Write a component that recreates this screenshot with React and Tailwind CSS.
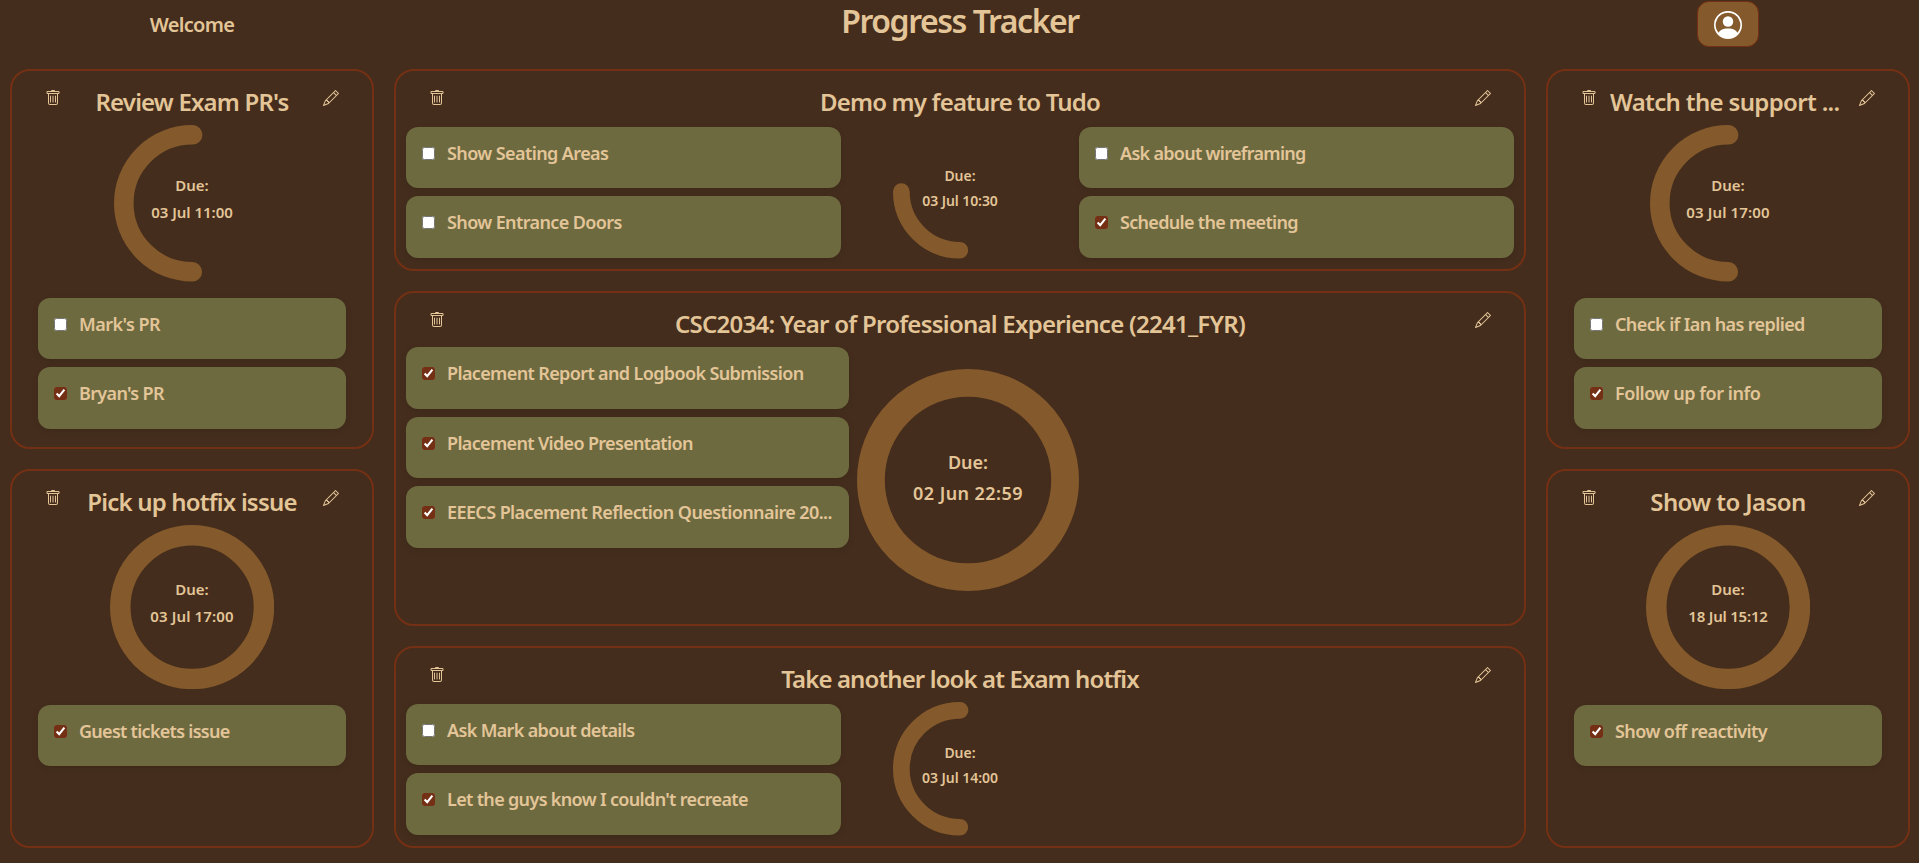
import React from "react";
import { BsPencil, BsPersonCircle, BsTrash } from "react-icons/bs";

function Ring({
  size,
  fraction = 1,
  dueDate,
  textClass,
  dateTracking = "tracking-[0.008em]",
  lift = "pb-2",
}) {
  const stroke = size / 8;
  const radius = (size - stroke) / 2;
  const center = size / 2;
  const length = 2 * Math.PI * radius;
  // A partial ring starts at the bottom and runs clockwise
  return (
    <div className="relative shrink-0" style={{ width: size, height: size }}>
      <svg width={size} height={size} className="block">
        <circle
          cx={center}
          cy={center}
          r={radius}
          fill="none"
          stroke="#84592B"
          strokeWidth={stroke}
          strokeLinecap={fraction < 1 ? "round" : "butt"}
          strokeDasharray={fraction < 1 ? `${length * fraction} ${length}` : undefined}
          transform={`rotate(90 ${center} ${center})`}
        />
      </svg>
      <div
        className={`absolute inset-0 flex flex-col items-center justify-center whitespace-nowrap ${lift}`}
      >
        <span className={textClass}>Due:</span>
        <span className={`${textClass} ${dateTracking}`}>{dueDate}</span>
      </div>
    </div>
  );
}

function Task({ label, done = false, tracking = "tracking-[-0.034em]" }) {
  return (
    <label className="flex h-[61.75px] shrink-0 items-start rounded-xl bg-[#6D6A40] pl-4 shadow-[0_2px_6px_rgba(0,0,0,0.1)]">
      <input
        type="checkbox"
        defaultChecked={done}
        className="mt-5 size-[13px] shrink-0 accent-[#743014]"
      />
      <span className={`ml-3 pt-[13px] text-[18px] leading-[27px] whitespace-nowrap ${tracking}`}>
        {label}
      </span>
    </label>
  );
}

function TaskList({ className = "", tasks }) {
  return (
    <div className={`flex flex-col gap-2 ${className}`}>
      {tasks.map((task) => (
        <Task key={task.label} {...task} />
      ))}
    </div>
  );
}

function Card({ title, titleClass = "text-center tracking-[-0.034em]", className = "", children }) {
  return (
    <section
      className={`flex min-h-0 flex-col rounded-[20px] border-2 border-[#743014] ${className}`}
    >
      <div className="flex h-[54px] shrink-0 items-start px-[33px]">
        <BsTrash size={16} className="mt-[19px] shrink-0" />
        <h2
          className={`mx-[13px] min-w-0 flex-1 pt-[13px] text-2xl leading-9 font-semibold whitespace-nowrap ${titleClass}`}
        >
          {title}
        </h2>
        <BsPencil size={16} className="mt-[19px] shrink-0" />
      </div>
      {children}
    </section>
  );
}

const sideDue = "text-[15px] leading-[27px]";
const midDue = "text-[14px] leading-[25px]";

function SideCard({ title, titleClass, ring, fraction, dueDate, dateTracking, tasks }) {
  return (
    <Card title={title} titleClass={titleClass} className="flex-1">
      <div className="flex flex-col items-center gap-4">
        <Ring
          size={ring}
          fraction={fraction}
          dueDate={dueDate}
          textClass={sideDue}
          dateTracking={dateTracking}
        />
        <TaskList className="w-[308px]" tasks={tasks} />
      </div>
    </Card>
  );
}

export default function App() {
  return (
    <div className="flex h-[863px] w-[1920px] flex-col bg-[#442D1C] px-[10px] pb-[15px] font-['Noto_Sans',sans-serif] font-semibold text-[#E3C598]">
      <header className="grid h-[69px] shrink-0 grid-cols-[364px_1132px_364px] items-start gap-5">
        <p className="pt-[10px] text-center text-xl leading-[30px] tracking-[-0.033em]">Welcome</p>
        <h1 className="pt-px text-center text-[32px] leading-10 font-semibold tracking-[-0.045em]">
          Progress Tracker
        </h1>
        <button className="mt-px flex h-[46px] w-[62px] items-center justify-center justify-self-center rounded-xl border border-[#743014] bg-[#84592B] pt-[2px] text-white">
          <BsPersonCircle size={28} />
        </button>
      </header>

      <main className="grid min-h-0 flex-1 grid-cols-[364px_1132px_364px] gap-5">
        <div className="flex min-h-0 flex-col gap-5">
          <SideCard
            title="Review Exam PR's"
            ring={156.6}
            fraction={0.5}
            dueDate="03 Jul 11:00"
            dateTracking="tracking-[-0.002em]"
            tasks={[
              { label: "Mark's PR", tracking: "tracking-[-0.03em]" },
              { label: "Bryan's PR", done: true, tracking: "tracking-[-0.037em]" },
            ]}
          />
          <SideCard
            title="Pick up hotfix issue"
            ring={164.2}
            dueDate="03 Jul 17:00"
            tasks={[{ label: "Guest tickets issue", done: true, tracking: "tracking-[-0.04em]" }]}
          />
        </div>

        <div className="flex min-h-0 flex-col gap-5">
          <Card title="Demo my feature to Tudo" className="h-[201.5px] shrink-0">
            <div className="flex justify-between px-[10px]">
              <TaskList
                className="w-[435px] pt-[1.6px]"
                tasks={[
                  { label: "Show Seating Areas", tracking: "tracking-[-0.033em]" },
                  { label: "Show Entrance Doors", tracking: "tracking-[-0.034em]" },
                ]}
              />
              <Ring
                size={133.6}
                fraction={0.25}
                dueDate="03 Jul 10:30"
                textClass={midDue}
                dateTracking="tracking-[-0.005em]"
              />
              <TaskList
                className="w-[435px] pt-[1.6px]"
                tasks={[
                  { label: "Ask about wireframing", tracking: "tracking-[-0.039em]" },
                  { label: "Schedule the meeting", done: true, tracking: "tracking-[-0.038em]" },
                ]}
              />
            </div>
          </Card>

          <Card
            title="CSC2034: Year of Professional Experience (2241_FYR)"
            titleClass="text-center tracking-[-0.031em]"
            className="flex-1"
          >
            <div className="flex gap-2 px-[10px]">
              <TaskList
                className="w-[443px] pt-[0.4px]"
                tasks={[
                  { label: "Placement Report and Logbook Submission", done: true, tracking: "tracking-[-0.035em]" },
                  { label: "Placement Video Presentation", done: true, tracking: "tracking-[-0.037em]" },
                  {
                    label: "EEECS Placement Reflection Questionnaire 20...",
                    done: true,
                    tracking: "tracking-[-0.033em]",
                  },
                ]}
              />
              <div className="pt-[22.6px]">
                <Ring
                  size={222}
                  dueDate="02 Jun 22:59"
                  textClass="text-[18px] leading-[31px]"
                  dateTracking="tracking-[0.024em]"
                  lift="pb-[5px]"
                />
              </div>
            </div>
          </Card>

          <Card
            title="Take another look at Exam hotfix"
            titleClass="text-center tracking-[-0.037em]"
            className="h-[201.9px] shrink-0"
          >
            <div className="grid grid-cols-[435px_238px_435px] px-[10px]">
              <TaskList
                className="pt-[1.5px]"
                tasks={[
                  { label: "Ask Mark about details", tracking: "tracking-[-0.036em]" },
                  {
                    label: "Let the guys know I couldn't recreate",
                    done: true,
                    tracking: "tracking-[-0.037em]",
                  },
                ]}
              />
              <div className="flex justify-center">
                <Ring
                  size={133.6}
                  fraction={0.5}
                  dueDate="03 Jul 14:00"
                  textClass={midDue}
                  dateTracking="tracking-[-0.003em]"
                />
              </div>
            </div>
          </Card>
        </div>

        <div className="flex min-h-0 flex-col gap-5">
          <SideCard
            title="Watch the support ..."
            titleClass="text-left tracking-[-0.0275em]"
            ring={156.6}
            fraction={0.5}
            dueDate="03 Jul 17:00"
            tasks={[
              { label: "Check if Ian has replied" },
              { label: "Follow up for info", done: true, tracking: "tracking-[-0.025em]" },
            ]}
          />
          <SideCard
            title="Show to Jason"
            titleClass="text-center tracking-[-0.025em]"
            ring={164.2}
            dueDate="18 Jul 15:12"
            dateTracking="tracking-[-0.014em]"
            tasks={[{ label: "Show off reactivity", done: true, tracking: "tracking-[-0.032em]" }]}
          />
        </div>
      </main>
    </div>
  );
}
